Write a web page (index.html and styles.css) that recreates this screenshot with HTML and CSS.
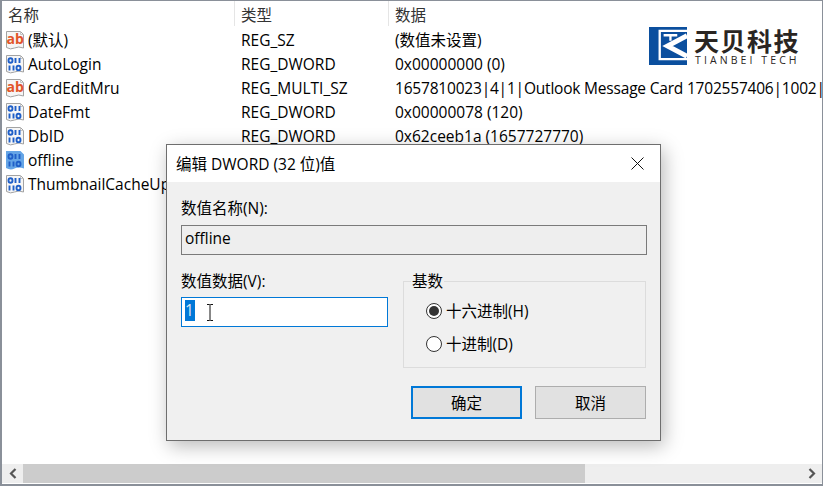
FILE: index.html
```html
<!DOCTYPE html>
<html lang="zh">
<head>
<meta charset="utf-8">
<title>编辑 DWORD</title>
<link rel="stylesheet" href="styles.css">
</head>
<body>
<svg class="defs" width="0" height="0" aria-hidden="true">
  <symbol id="sheet" viewBox="0 0 20 20">
    <path d="M1.500 1.500H15.500l3 3V18Q13.500 16 9.500 18T1.500 17.500Z" fill="#f6f6f6" stroke="#a3a3a3"/>
    <path d="M15.500 1.500V4.500H18.500" fill="none" stroke="#c4c4c4"/>
  </symbol>
  <symbol id="bits" viewBox="0 0 20 20">
    <ellipse class="bit" cx="5.500" cy="6.500" rx="2" ry="2.300"/>
    <path class="bit" d="M10.500 4v5M14.500 4v5M4.500 11.500v5M8.500 11.500v5"/>
    <ellipse class="bit" cx="13.500" cy="14" rx="2" ry="2.300"/>
  </symbol>
  <symbol id="ico-ab" viewBox="0 0 20 20">
    <use href="#sheet"/>
    <text x="1.500" y="13.500" class="ab">ab</text>
  </symbol>
  <symbol id="ico-bin" viewBox="0 0 20 20">
    <use href="#sheet"/>
    <use href="#bits"/>
  </symbol>
  <symbol id="ico-bin-sel" viewBox="0 0 20 20">
    <path d="M1 1H15.500l3.500 3.500V18.500Q13.500 16.500 9.500 18.500T1 18Z" fill="#65a5e6"/>
    <use href="#bits"/>
  </symbol>
</svg>

<div class="window">
  <div class="list">
    <div class="row head">
      <div class="cell c1">名称</div>
      <div class="cell c2">类型</div>
      <div class="cell c3">数据</div>
    </div>
    <div class="row"><div class="cell c1"><svg class="ico"><use href="#ico-ab"/></svg>(默认)</div><div class="cell c2">REG_SZ</div><div class="cell c3">(数值未设置)</div></div>
    <div class="row"><div class="cell c1"><svg class="ico"><use href="#ico-bin"/></svg>AutoLogin</div><div class="cell c2">REG_DWORD</div><div class="cell c3">0x00000000 (0)</div></div>
    <div class="row"><div class="cell c1"><svg class="ico"><use href="#ico-ab"/></svg>CardEditMru</div><div class="cell c2">REG_MULTI_SZ</div><div class="cell c3 tight">1657810023|4|1|Outlook Message Card 1702557406|1002|2</div></div>
    <div class="row"><div class="cell c1"><svg class="ico"><use href="#ico-bin"/></svg>DateFmt</div><div class="cell c2">REG_DWORD</div><div class="cell c3">0x00000078 (120)</div></div>
    <div class="row"><div class="cell c1"><svg class="ico"><use href="#ico-bin"/></svg>DbID</div><div class="cell c2">REG_DWORD</div><div class="cell c3">0x62ceeb1a (1657727770)</div></div>
    <div class="row"><div class="cell c1"><svg class="ico"><use href="#ico-bin-sel"/></svg>offline</div><div class="cell c2"></div><div class="cell c3"></div></div>
    <div class="row"><div class="cell c1"><svg class="ico"><use href="#ico-bin"/></svg>ThumbnailCacheUp</div><div class="cell c2"></div><div class="cell c3"></div></div>
  </div>
  <div class="hscroll">
    <div class="arrow"><svg width="8" height="11" viewBox="0 0 8 11"><path d="M6.500 1L2 5.500 6.500 10" class="chev"/></svg></div>
    <div class="thumb"></div>
    <div class="track"></div>
    <div class="arrow"><svg width="8" height="11" viewBox="0 0 8 11"><path d="M1.500 1L6 5.500 1.500 10" class="chev"/></svg></div>
  </div>
</div>

<div class="logo">
  <svg class="logo-mark" viewBox="0 0 39 39">
    <rect width="39" height="39" fill="#0b4f9e"/>
    <path d="M39 4H11V33H39" fill="none" stroke="#fff" stroke-width="2.400"/>
    <path d="M15 8.500H29M22 8.500V14" fill="none" stroke="#fff" stroke-width="2.400"/>
    <path d="M39 9L19 19.500 39 30" fill="none" stroke="#fff" stroke-width="5"/>
  </svg>
  <div class="logo-text">
    <div class="logo-cn">天贝科技</div>
    <div class="logo-en">TIANBEI TECH</div>
  </div>
</div>

<div class="dialog">
  <div class="titlebar">
    <span>编辑 DWORD (32 位)值</span>
    <svg class="close" width="13" height="13" viewBox="0 0 13 13"><path d="M.5 .5L12.500 12.500M12.500 .5L.5 12.500"/></svg>
  </div>
  <div class="body">
    <div class="label">数值名称(N):</div>
    <div class="name-field">offline</div>
    <div class="columns">
      <div class="left">
        <div class="label">数值数据(V):</div>
        <div class="value-field">
          <span class="sel">1</span>
          <svg class="ibeam" width="8" height="17" viewBox="0 0 8 17"><path d="M1 .5H3.500L4 1 4.500 .5H7M4 1V16M1 16.500H3.500L4 16 4.500 16.500H7"/></svg>
        </div>
      </div>
      <div class="group">
        <div class="legend">基数</div>
        <div class="radio-row"><span class="radio on"></span>十六进制(H)</div>
        <div class="radio-row"><span class="radio"></span>十进制(D)</div>
      </div>
    </div>
    <div class="buttons">
      <div class="btn primary">确定</div>
      <div class="btn">取消</div>
    </div>
  </div>
</div>
</body>
</html>
```
FILE: styles.css
```css
* { box-sizing: border-box; }
html, body { margin: 0; padding: 0; }
body {
  width: 823px;
  height: 486px;
  overflow: hidden;
  position: relative;
  background: #fff;
  color: #000;
  font-family: "Open Sans", "Noto Sans CJK SC", sans-serif;
  font-size: 15.5px;
}
.defs { position: absolute; }

.window {
  height: 486px;
  border: solid #8a9099;
  border-width: 1px 1px 2px 2px;
  display: flex;
  flex-direction: column;
  background: #fff;
}
.list { flex: 1; overflow: hidden; }
.row {
  height: 24px;
  display: grid;
  grid-template-columns: 232px 154px 1fr;
  white-space: nowrap;
  line-height: 20px;
}
.head { height: 27px; color: #333; padding-bottom: 2px; }
.head .cell { padding-top: 3px; }
.head .c2, .head .c3 { border-left: 1px solid #e5e5e5; }
.cell { display: flex; align-items: center; padding-left: 6px; min-width: 0; }
.row:not(.head) .c1 { padding-left: 3px; }
.row:not(.head) .c2, .row:not(.head) .c3 { padding-left: 7px; }
.tight { letter-spacing: -0.2px; }
.ico { width: 20px; height: 20px; margin-right: 3px; flex: none; }
.ab { font: bold 14px "Open Sans", sans-serif; fill: #e2552a; }
.bit { fill: none; stroke: #1f5fc8; stroke-width: 1.900; }

.hscroll { height: 19px; display: flex; background: #eee; margin-bottom: 1px; flex: none; }
.arrow { width: 21px; display: flex; align-items: center; justify-content: center; flex: none; background: #eee; }
.chev { fill: none; stroke: #555; stroke-width: 2.200; }
.thumb { width: 562px; background: #ccc; }
.track { flex: 1; }

.logo {
  position: absolute;
  left: 649px;
  top: 27px;
  display: flex;
  gap: 7px;
}
.logo-mark { width: 38px; height: 38px; }
.logo-text { color: #2a2522; }
.logo-cn { font: bold 25px/27px "Noto Sans CJK SC", sans-serif; letter-spacing: 1.500px; white-space: nowrap; }
.logo-en { font: 10.5px/12px "Open Sans", sans-serif; letter-spacing: 3.100px; white-space: nowrap; margin-left: 1px; }

.dialog {
  position: absolute;
  left: 166px;
  top: 144px;
  width: 495px;
  height: 297px;
  border: 1px solid #6e6e6e;
  background: #f0f0f0;
  box-shadow: 3px 5px 18px rgba(0,0,0,.28);
  display: flex;
  flex-direction: column;
}
.titlebar {
  height: 37px;
  background: #fff;
  display: flex;
  align-items: center;
  justify-content: space-between;
  padding: 0 16px 0 9px;
  flex: none;
}
.close { stroke: #111; stroke-width: 1; fill: none; }
.body { flex: 1; padding: 16px 13px 0 14px; }
.label { height: 20px; line-height: 20px; }
.name-field {
  margin-top: 7px;
  height: 30px;
  border: 1px solid #7a7a7a;
  background: #eee;
  padding-left: 3px;
  line-height: 25px;
}
.columns { display: flex; margin-top: 16px; height: 97px; }
.left { width: 207px; flex: none; }
.value-field {
  position: relative;
  margin-top: 6px;
  width: 207px;
  height: 30px;
  border: 1px solid #0078d7;
  background: #fff;
  padding: 2px 0 0 3px;
  line-height: 21px;
}
.sel { display: inline-block; background: #0078d7; color: #dfe9f5; width: 10px; height: 21px; }
.ibeam { position: absolute; left: 24px; top: 6px; stroke: #111; fill: none; }
.group {
  position: relative;
  margin-left: 15px;
  margin-top: 10px;
  width: 243px;
  height: 87px;
  border: 1px solid #dcdcdc;
  padding: 13px 0 0 22px;
}
.legend {
  position: absolute;
  left: 7px;
  top: -11px;
  background: #f0f0f0;
  padding: 0 1px;
  line-height: 20px;
}
.radio-row { height: 33px; display: flex; align-items: center; gap: 4px; padding-bottom: 2px; }
.radio {
  width: 16px;
  height: 16px;
  border: 1px solid #333;
  border-radius: 50%;
  background: #fff;
  flex: none;
  display: flex;
  align-items: center;
  justify-content: center;
}
.radio.on::after {
  content: "";
  width: 10px;
  height: 10px;
  border-radius: 50%;
  background: #333;
}
.buttons { display: flex; justify-content: flex-end; gap: 13px; margin-top: 18px; padding-right: 1px; }
.btn {
  width: 111px;
  height: 33px;
  background: #e1e1e1;
  border: 1px solid #adadad;
  display: flex;
  align-items: center;
  justify-content: center;
}
.btn.primary { border: 2px solid #0078d7; }
```
